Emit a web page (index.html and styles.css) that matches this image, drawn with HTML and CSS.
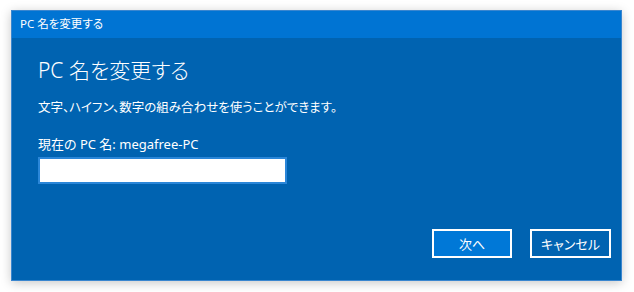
FILE: index.html
```html
<!DOCTYPE html>
<html lang="ja">
<head>
<meta charset="UTF-8">
<title>PC 名を変更する</title>
<link rel="stylesheet" href="styles.css">
</head>
<body>
<div class="window">
  <div class="titlebar">PC 名を変更する</div>

  <div class="content">
    <h1>PC 名を変更する</h1>
    <p class="desc">文字、ハイフン、数字の組み合わせを使うことができます。</p>
    <div class="label">現在の PC 名: megafree-PC</div>
    <input class="name-input" type="text">

    <!-- ボタン -->
    <div class="actions">
      <button class="btn btn-primary">次へ</button>
      <button class="btn">キャンセル</button>
    </div>
  </div>
</div>
</body>
</html>
```

FILE: styles.css
```css
:root {
  --title: #0074d3;
  --body: #0063b1;
  --primary: #0078d7;
  --text: #ffffff;
}

* { margin: 0; padding: 0; box-sizing: border-box; }

body {
  background: #ffffff;
  font-family: 'Noto Sans', 'Noto Sans CJK JP', sans-serif;
  font-feature-settings: "palt";
  color: var(--text);
  padding: 10px 12px 11px 11px;
}

.window {
  width: 611px;
  height: 271px;
  background: var(--body);
  border: 1px solid #3a86cf;
  box-shadow: 0 2px 10px rgba(0,0,0,0.22);
  display: flex;
  flex-direction: column;
}

.titlebar {
  background: var(--title);
  height: 27px;
  padding-left: 8px;
  font-size: 11.5px;
  line-height: 26px;
}

.content {
  flex: 1;
  display: flex;
  flex-direction: column;
  align-items: flex-start;
  padding: 17px 10px 22px 26px;
}

h1 {
  font-size: 21px;
  font-weight: 300;
  line-height: 30px;
  margin-bottom: 14px;
}

.desc {
  font-size: 12.5px;
  line-height: 18px;
  margin-bottom: 18px;
}

.label {
  font-size: 13px;
  line-height: 18px;
  margin-bottom: 4px;
}

.name-input {
  width: 249px;
  height: 27px;
  border: 2px solid #2a86d8;
  background: #ffffff;
  outline: none;
}

.actions {
  margin-top: auto;
  align-self: flex-end;
  display: flex;
  gap: 18px;
}

.btn {
  font-family: inherit;
  font-feature-settings: "palt";
  color: var(--text);
  font-size: 13px;
  background: var(--body);
  border: 2px solid #ffffff;
  width: 81px;
  height: 29px;
}

.btn-primary {
  background: var(--primary);
  width: 80px;
}
```
